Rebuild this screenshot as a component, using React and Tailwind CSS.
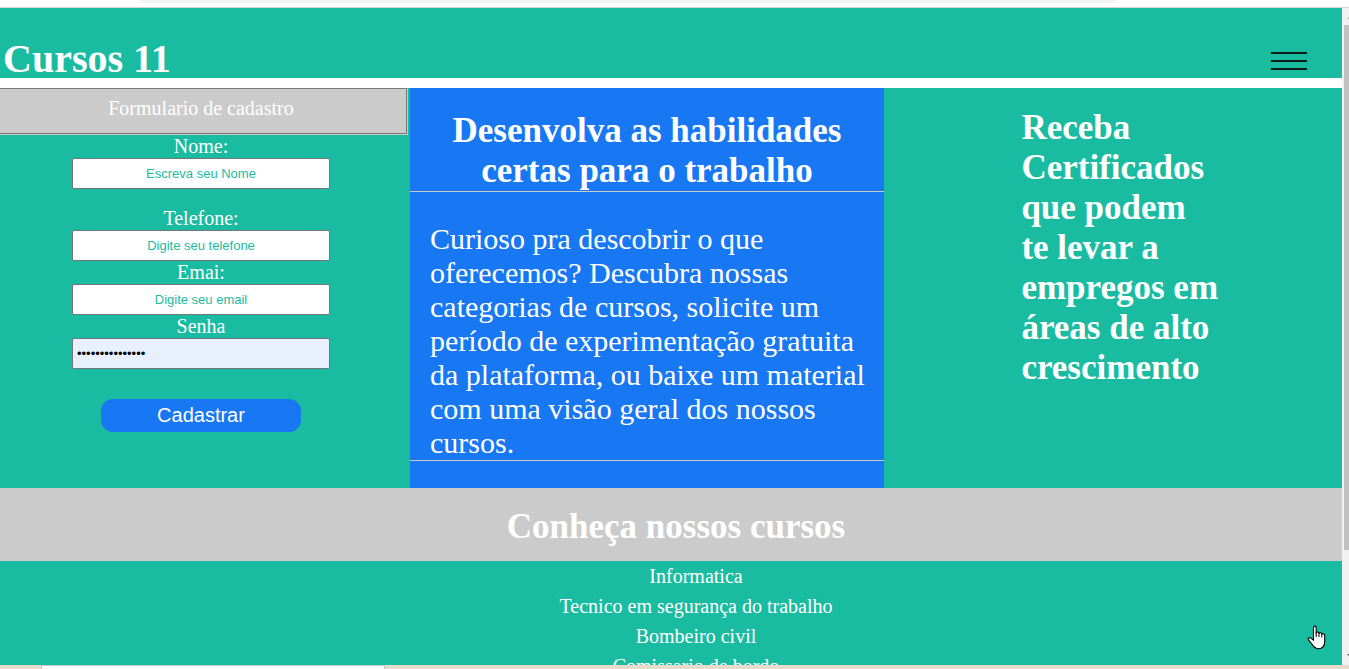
import React from "react";

const courses = [
  "Informatica",
  "Tecnico em segurança do trabalho",
  "Bombeiro civil",
  "Comissario de bordo",
];

function BrowserEdge() {
  return (
    <div className="flex h-2 shrink-0 justify-center border-b border-[#d5d7d9] bg-white pr-[93px]">
      <div className="h-[3px] w-[976px] rounded-b-lg bg-[#f1f3f4]" />
    </div>
  );
}

function Header() {
  return (
    <header className="flex items-end justify-between bg-[#1abca1] pt-8 pr-[35px] pl-[3px]">
      <h1 className="text-[40px] leading-[38px] font-bold">Cursos 11</h1>
      <button type="button" aria-label="Abrir menu" className="pb-2">
        <svg width="36" height="18" viewBox="0 0 36 18" className="block">
          <path d="M0 1H36M0 9H36M0 17H36" stroke="#0a1f1c" strokeWidth="2" />
        </svg>
      </button>
    </header>
  );
}

function Field({ id, label, className = "", ...input }) {
  return (
    <div className={"flex w-full flex-col items-center " + className}>
      <label htmlFor={id} className="text-[20px] leading-[23px]">
        {label}
      </label>
      <input
        id={id}
        className={
          "h-[31px] w-[258px] rounded-xs border border-[#767676] px-1 text-[13px] text-black outline-none placeholder:text-center placeholder:text-[#1abca1] " +
          (input.type === "password" ? "bg-[#e8f0fe]" : "bg-white")
        }
        style={{ fontFamily: '"Liberation Sans", Arial, sans-serif' }}
        {...input}
      />
    </div>
  );
}

function SignupForm() {
  return (
    <form className="pr-0.5" onSubmit={(e) => e.preventDefault()}>
      <h2 className="border-2 border-l-0 border-[#cbcbcb] bg-[#cbcbcb] pt-[7px] pr-1 pb-[13px] text-center text-[20px] leading-[23px] [border-style:groove]">
        Formulario de cadastro
      </h2>
      <div className="flex flex-col items-center pr-1.5">
        <Field id="nome" label="Nome:" type="text" placeholder="Escreva seu Nome" className="mb-[18px]" />
        <Field id="telefone" label="Telefone:" type="tel" placeholder="Digite seu telefone" />
        <Field id="email" label="Emai:" type="email" placeholder="Digite seu email" />
        <Field id="senha" label="Senha" type="password" defaultValue="senhasegura1234" />
        <button
          type="submit"
          className="mt-[30px] h-[33px] w-[200px] rounded-xl bg-[#1877f2] pb-0.5 text-[20px]"
          style={{ fontFamily: '"Liberation Sans", Arial, sans-serif' }}
        >
          Cadastrar
        </button>
      </div>
    </form>
  );
}

function Scrollbar() {
  return (
    <div className="flex w-[7px] shrink-0 flex-col overflow-hidden bg-[#f1f1f1] pl-0.5">
      <svg width="8" height="17" viewBox="0 0 8 17" className="shrink-0">
        <path d="M3 11L7 7V11Z" fill="#a3b39f" />
      </svg>
      <div className="h-[525px] shrink-0 bg-[#c1c1c1]" />
      <svg width="8" height="17" viewBox="0 0 8 17" className="mt-auto shrink-0">
        <path d="M3 6H8V10L7 10Z" fill="#505050" />
      </svg>
    </div>
  );
}

export default function App() {
  return (
    <div
      className="relative flex h-screen flex-col overflow-hidden bg-white text-white"
      style={{ fontFamily: '"Liberation Serif", "Times New Roman", serif' }}
    >
      <BrowserEdge />
      <div className="flex min-h-0 flex-1">
        <main className="min-w-0 flex-1 overflow-hidden">
          <Header />
          <div className="mt-2.5 grid min-h-[400px] grid-cols-[410fr_474fr_458fr] bg-[#1abca1]">
            <SignupForm />
            <section className="bg-[#1877f2]">
              <h2 className="border-b border-[#cbcbcb] px-5 pt-[23px] text-center text-[35px] leading-[40px] font-bold">
                Desenvolva as habilidades certas para o trabalho
              </h2>
              <p className="border-b border-[#cbcbcb] pt-[30px] pr-4 pl-5 text-[30px] leading-[34px]">
                Curioso pra descobrir o que oferecemos? Descubra nossas categorias de cursos, solicite um período de
                experimentação gratuita da plataforma, ou baixe um material com uma visão geral dos nossos cursos.
              </p>
            </section>
            <section className="pt-5 pl-[30%]">
              <h2 className="text-[35px] leading-[40px] font-bold">
                Receba
                <br />
                Certificados
                <br />
                que podem
                <br />
                te levar a
                <br />
                empregos em
                <br />
                áreas de alto
                <br />
                crescimento
              </h2>
            </section>
          </div>
          <section className="bg-[#1abca1]">
            <h2 className="bg-[#cbcbcb] pt-[19px] pb-3.5 pl-2.5 text-center text-[35px] leading-[40px] font-bold">
              Conheça nossos cursos
            </h2>
            <ul className="pl-[50px] text-center text-[20px] leading-[30px]">
              {courses.map((course) => (
                <li key={course}>{course}</li>
              ))}
            </ul>
          </section>
        </main>
        <Scrollbar />
      </div>
      <div className="h-1 shrink-0 bg-[#e9dccd] pl-[41px]">
        <div className="h-1 w-[344px] border border-b-0 border-[#c4c8cc] bg-white" />
      </div>
      <svg width="19" height="25" viewBox="0 0 19 25" className="absolute right-[23px] bottom-[19px]">
        <path
          d="M6.5 14V2.8C6.5 .6 9.2 .6 9.2 2.8V7.5C10.2 6.5 11.8 6.9 12 8.2C13 7.3 14.5 7.8 14.8 9C16 8.3 17.7 9 17.7 10.6V16C17.7 21 15.5 23.8 11.5 23.8C8 23.8 6.5 21.5 4.8 19L1.4 14.6C.6 13.2 2.4 12 3.8 13.1L6.5 15.2Z"
          fill="#fff"
          stroke="#000"
          strokeWidth="1.1"
        />
        <path d="M9.2 7V12M12 8V12M14.8 9V12.5" stroke="#000" strokeWidth="1" fill="none" />
      </svg>
    </div>
  );
}
